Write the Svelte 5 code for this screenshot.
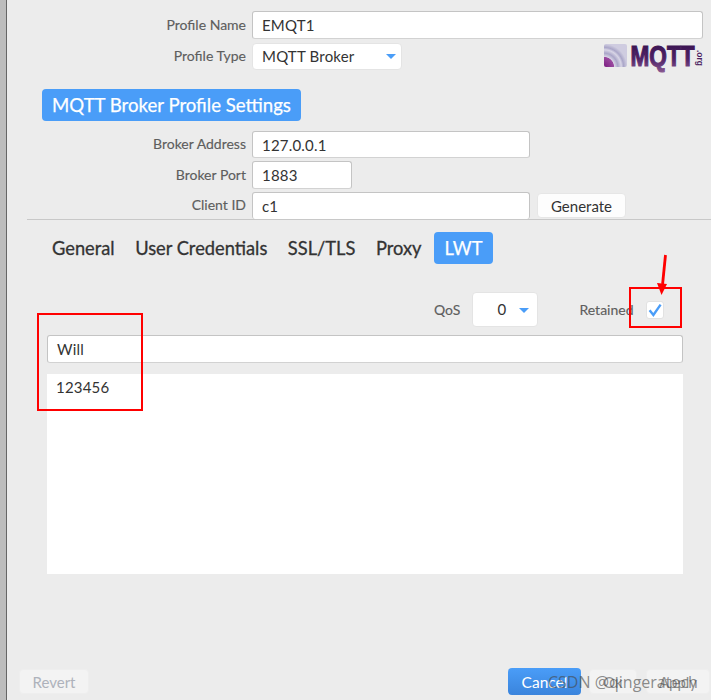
<script>
  const tabs = ['General', 'User Credentials', 'SSL/TLS', 'Proxy', 'LWT'];
</script>

<div class="page">
  <div class="strip"></div>
  <main class="content">
    <section class="top">
      <div class="row first">
        <span class="label">Profile Name</span>
        <div class="field grow">EMQT1</div>
      </div>
      <div class="row second">
        <span class="label">Profile Type</span>
        <div class="field select type">MQTT Broker<i class="caret"></i></div>
        <svg class="logo" width="100" height="25" viewBox="0 0 100 25" aria-hidden="true">
          <defs>
            <linearGradient id="mq" x1="0" y1="0" x2="0" y2="1">
              <stop offset="0" stop-color="#34104a" />
              <stop offset=".6" stop-color="#4e2166" />
              <stop offset="1" stop-color="#86568f" />
            </linearGradient>
            <radialGradient id="rd" cx="0" cy="1" r="1">
              <stop offset="0" stop-color="#7b1c80" />
              <stop offset=".42" stop-color="#9a4a9f" />
              <stop offset=".45" stop-color="#d8d5e6" />
              <stop offset=".6" stop-color="#aaa6c8" />
              <stop offset=".75" stop-color="#d8d5e6" />
              <stop offset=".85" stop-color="#aaa6c8" />
              <stop offset="1" stop-color="#cfcce0" />
            </radialGradient>
          </defs>
          <rect x="0" y="0" width="23" height="23" rx="2" fill="url(#rd)" />
          <text class="mq" x="26.500" y="22" textLength="64" lengthAdjust="spacingAndGlyphs" fill="url(#mq)" stroke="url(#mq)" stroke-width="1.200">MQTT</text>
          <text class="org" transform="translate(92.500 6) rotate(90)" fill="#4a1c60">.org</text>
        </svg>
      </div>

      <h2 class="chip heading">MQTT Broker Profile Settings</h2>

      <div class="row address">
        <span class="label">Broker Address</span>
        <div class="field wide">127.0.0.1</div>
      </div>
      <div class="row port">
        <span class="label">Broker Port</span>
        <div class="field short">1883</div>
      </div>
      <div class="row client">
        <span class="label">Client ID</span>
        <div class="field wide">c1</div>
        <button class="btn generate">Generate</button>
      </div>
    </section>

    <nav class="tabs">
      {#each tabs as t}
        <span class="tab" class:active={t === 'LWT'}>{t}</span>
      {/each}
    </nav>

    <section class="lwt">
      <div class="options">
        <span class="label">QoS</span>
        <div class="qos">0<i class="caret"></i></div>
        <span class="label retained">Retained</span>
        <span class="check">
          <svg width="18" height="18" viewBox="0 0 18 18" aria-hidden="true">
            <path d="M3.6 9.200 L7.400 14 L14.600 3.600" fill="none" stroke="#4a9df8" stroke-width="2.400" />
          </svg>
        </span>
      </div>
      <div class="field will">Will</div>
      <div class="message">123456</div>
    </section>

    <footer class="actions">
      <button class="btn revert">Revert</button>
      <button class="btn cancel">Cancel</button>
      <button class="btn ok">Ok</button>
      <button class="btn apply">Apply</button>
    </footer>
  </main>

  <div class="box box-a"></div>
  <div class="box box-b"></div>
  <svg class="arrow" width="20" height="44" viewBox="0 0 20 44" aria-hidden="true">
    <path d="M12.500 1 L9.600 30" stroke="#f00" stroke-width="2.800" fill="none" />
    <path d="M4 29 L14 30 L8.500 41 Z" fill="#f00" />
  </svg>
  <div class="watermark">CSDN @qingeratech</div>
</div>

<style>
  :global(body) {
    margin: 0;
    background: #ececec;
  }
  .page {
    position: relative;
    width: 711px;
    height: 700px;
    overflow: hidden;
    display: flex;
    background: #ececec;
    font-family: Lato, "Open Sans", sans-serif;
    color: #333;
  }
  .strip {
    width: 6px;
    flex: none;
    background: #bdbdbd;
    border-right: 1px solid #666;
  }
  .content {
    flex: 1;
    min-width: 0;
    display: flex;
    flex-direction: column;
  }
  .top {
    padding-top: 11px;
    display: flex;
    flex-direction: column;
    border-bottom: 1px solid #c8c8c8;
    margin-left: 20px;
  }
  .row {
    display: flex;
    align-items: center;
  }
  .row .label {
    width: 219px;
    flex: none;
    text-align: right;
    margin-right: 6px;
    margin-bottom: 2px;
  }
  .second {
    margin-top: 4px;
    height: 28px;
  }
  .row.second .label {
    margin-bottom: 4px;
  }
  .label {
    font-size: 14px;
    color: #5e5e5e;
    white-space: nowrap;
    -webkit-text-stroke: .15px #5e5e5e;
  }
  .field {
    box-sizing: border-box;
    height: 28px;
    line-height: 27px;
    padding-left: 9px;
    font-size: 15px;
    color: #333;
    letter-spacing: .2px;
    background: #fff;
    border: 1px solid #c4c4c4;
    border-bottom-color: #d2d2d2;
    border-radius: 3px;
  }
  .grow {
    width: 451px;
  }
  .select {
    position: relative;
    border: 1px solid #e4e4e4;
    border-radius: 4px;
  }
  .type {
    width: 150px;
    height: 27px;
    line-height: 25px;
    margin-bottom: 1px;
  }
  .caret {
    position: absolute;
    width: 0;
    height: 0;
    border: 5px solid transparent;
    border-top: 5px solid #4a9df8;
    border-bottom: 0;
  }
  .type .caret {
    right: 5px;
    top: 10px;
  }
  .logo {
    margin-left: 202px;
    margin-bottom: 1px;
    flex: none;
    overflow: visible;
  }
  .mq {
    font: 700 30px "Liberation Sans", sans-serif;
  }
  .org {
    font: 700 8.500px "Liberation Sans", sans-serif;
  }
  .chip {
    background: #4a9df8;
    color: #fff;
    border-radius: 4px;
  }
  .heading {
    align-self: flex-start;
    margin: 18px 0 10px 15px;
    width: 259px;
    height: 32px;
    box-sizing: border-box;
    font-size: 18.600px;
    font-weight: 400;
    -webkit-text-stroke: .25px #fff;
    line-height: 32px;
    text-align: center;
    white-space: nowrap;
  }
  .wide {
    width: 278px;
    height: 27px;
  }
  .short {
    width: 100px;
  }
  .port {
    margin-top: 3px;
  }
  .client {
    margin-top: 3px;
    height: 27px;
  }
  .client .wide {
    border-bottom: 0;
  }
  .btn {
    box-sizing: border-box;
    font-family: inherit;
    font-size: 15px;
    color: #333;
    background: #f6f6f6;
    border: 1px solid #e6e6e6;
    border-radius: 4px;
    padding: 0;
  }
  .generate {
    width: 89px;
    height: 25px;
    margin-left: 7px;
    background: #fdfdfd;
  }
  .tabs {
    display: flex;
    align-items: center;
    gap: 20.500px;
    margin: 12px 0 0 45px;
    height: 32px;
  }
  .tab {
    font-size: 18.300px;
    font-weight: 400;
    color: #333;
    -webkit-text-stroke: .3px #333;
    white-space: nowrap;
  }
  .tab.active {
    box-sizing: border-box;
    width: 59px;
    height: 32px;
    line-height: 32px;
    margin-left: -8px;
    text-align: center;
    color: #fff;
    -webkit-text-stroke: .25px #fff;
    background: #4a9df8;
    border-radius: 4px;
  }
  .lwt {
    margin: 28px 0 0 40px;
    width: 636px;
    display: flex;
    flex-direction: column;
  }
  .options {
    display: flex;
    align-items: center;
    height: 35px;
    padding-left: 387px;
  }
  .qos {
    position: relative;
    box-sizing: border-box;
    width: 66px;
    height: 35px;
    margin-left: 12px;
    padding-left: 24px;
    line-height: 33px;
    font-size: 15px;
    background: #fff;
    border: 1px solid #e4e4e4;
    border-radius: 4px;
  }
  .qos .caret {
    right: 8px;
    top: 15px;
  }
  .retained {
    margin-left: 41px;
  }
  .check {
    box-sizing: border-box;
    width: 18px;
    height: 18px;
    margin-left: 12px;
    margin-top: 1px;
    background: #fff;
    border: 1px solid #e2e2e2;
    border-radius: 3px;
    display: block;
  }
  .check svg {
    display: block;
    margin: -1px;
  }
  .will {
    margin-top: 8px;
    height: 28px;
    line-height: 26px;
  }
  .message {
    box-sizing: border-box;
    margin-top: 11px;
    height: 200px;
    padding: 2px 9px;
    background: #fff;
    font-size: 15px;
    line-height: 22px;
    letter-spacing: .2px;
    color: #333;
  }
  .actions {
    margin-top: auto;
    display: flex;
    align-items: center;
    padding: 0 1px 5px 12px;
    height: 27px;
  }
  .revert,
  .ok,
  .apply {
    height: 25px;
    font-size: 15px;
    color: #aeb2bb;
    background: #f3f3f3;
    border-color: #eeeeee;
  }
  .revert {
    width: 70px;
  }
  .cancel {
    width: 73px;
    height: 27px;
    margin-left: auto;
    font-size: 15.500px;
    color: #fff;
    background: linear-gradient(#4a9df8, #3a84dc);
    border: 0;
  }
  .ok {
    width: 48px;
    margin-left: 8px;
    color: #8d8d8d;
  }
  .apply {
    width: 64px;
    margin-left: 9px;
    color: #8d8d8d;
  }
  .box {
    position: absolute;
    box-sizing: border-box;
    border: 2px solid #f00;
  }
  .box-a {
    left: 37px;
    top: 313px;
    width: 106px;
    height: 98px;
  }
  .box-b {
    left: 629px;
    top: 287px;
    width: 53px;
    height: 41px;
  }
  .arrow {
    position: absolute;
    left: 653px;
    top: 254px;
  }
  .watermark {
    position: absolute;
    left: 548px;
    top: 671px;
    font-size: 16px;
    color: rgba(70, 70, 70, .62);
    white-space: nowrap;
    font-family: "Open Sans", sans-serif;
  }
</style>
